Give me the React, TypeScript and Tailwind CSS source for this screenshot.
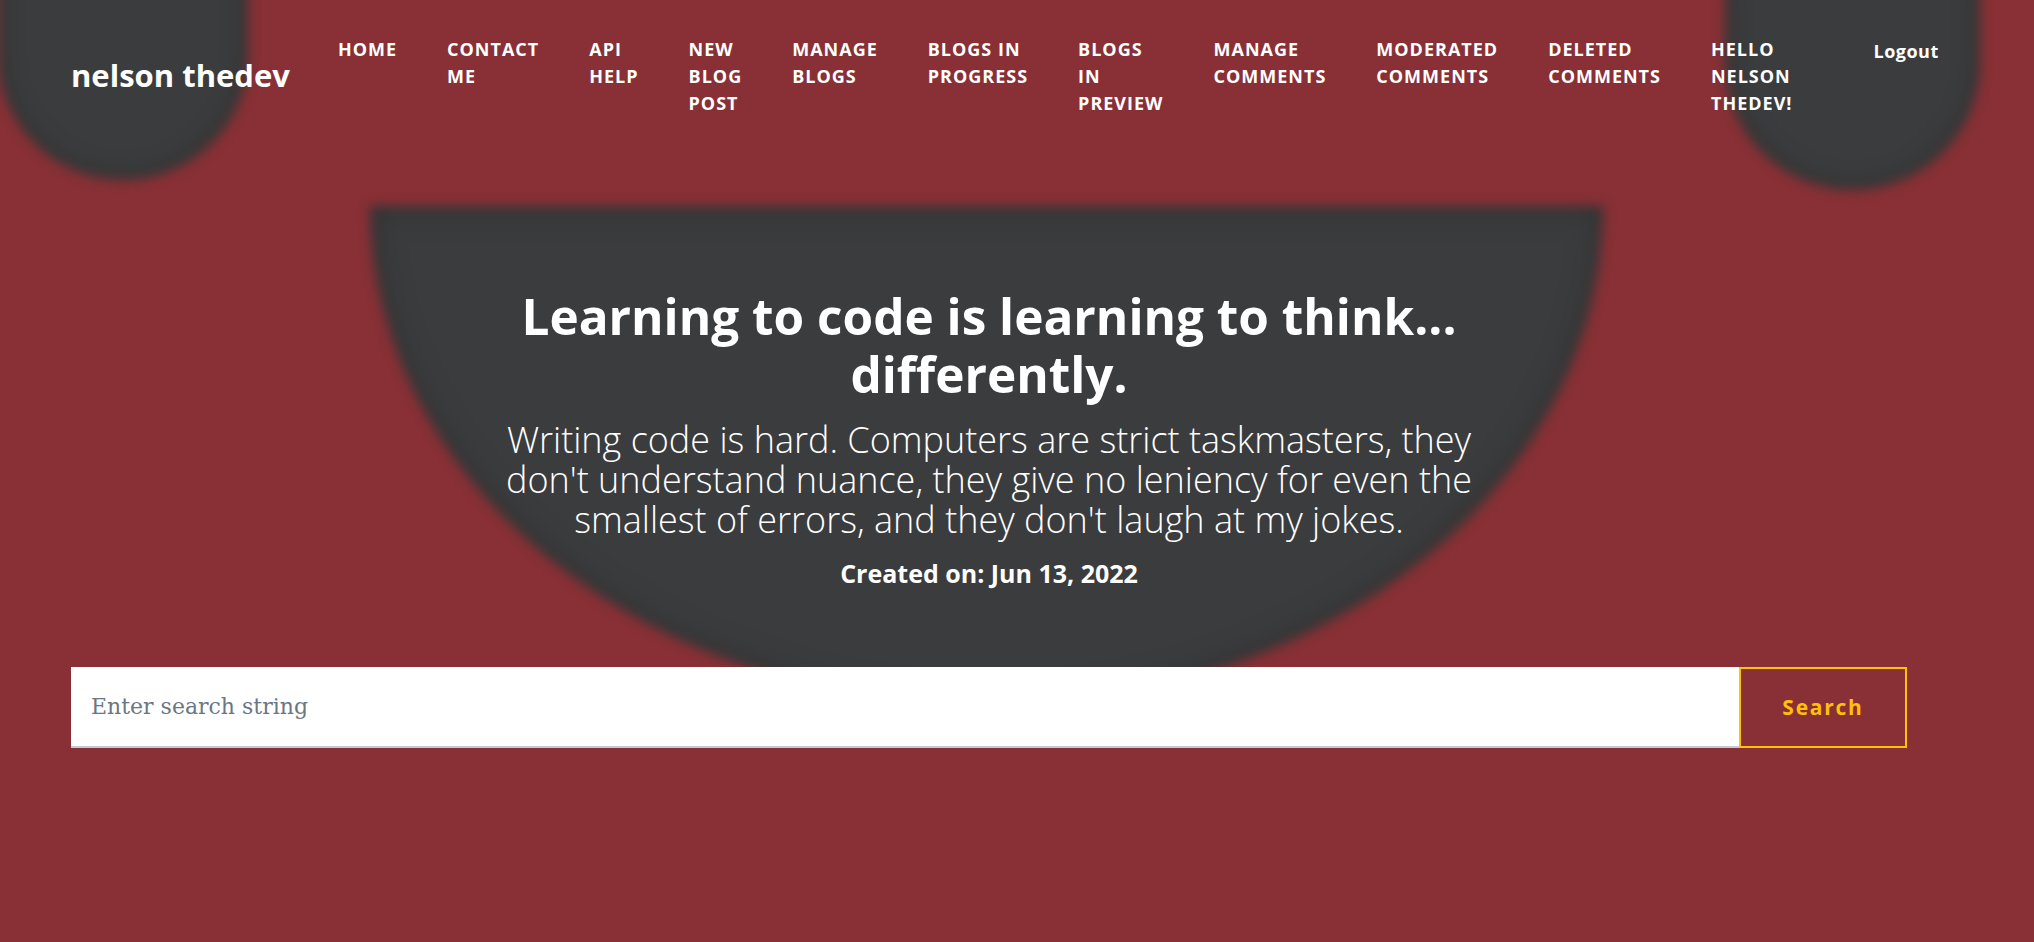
import React from "react";

const navLinks: string[][] = [
  ["HOME"],
  ["CONTACT", "ME"],
  ["API", "HELP"],
  ["NEW", "BLOG", "POST"],
  ["MANAGE", "BLOGS"],
  ["BLOGS IN", "PROGRESS"],
  ["BLOGS", "IN", "PREVIEW"],
  ["MANAGE", "COMMENTS"],
  ["MODERATED", "COMMENTS"],
  ["DELETED", "COMMENTS"],
  ["HELLO", "NELSON", "THEDEV!"],
];

const App = () => {
  return (
    <div className="relative min-h-screen h-[942px] overflow-hidden bg-[#883035] font-['Open_Sans',sans-serif] text-white">
      {/* background blobs */}
      <div className="pointer-events-none absolute left-[-2px] top-[-130px] h-[310px] w-[250px] rounded-full bg-[#3b3c3d] shadow-[inset_0_0_24px_#2c2f30] blur-[6px]" />
      <div className="pointer-events-none absolute left-[1725px] top-[-120px] h-[310px] w-[255px] rounded-full bg-[#3b3c3d] shadow-[inset_0_0_24px_#2c2f30] blur-[6px]" />
      <div className="pointer-events-none absolute left-[370px] top-[206px] h-[500px] w-[1233px] rounded-b-[50%_100%] bg-[#3b3c3d] shadow-[inset_0_0_30px_#2c2f30] blur-[6px]" />

      <div className="relative">
        {/* header */}
        <header className="flex items-start pl-[71px] pt-[36px]">
          <a className="mt-[17px] whitespace-nowrap text-[31px] font-bold leading-[45px]">
            nelson thedev
          </a>
          <ul className="ml-[48px] flex items-start gap-[50px]">
            {navLinks.map((lines, i) => (
              <li
                key={i}
                className="text-[18px] font-bold uppercase leading-[27px] tracking-[1px]"
              >
                {lines.map((l, j) => (
                  <div key={j} className="whitespace-nowrap">
                    {l}
                  </div>
                ))}
              </li>
            ))}
          </ul>
          <button className="ml-[81px] mt-[2px] text-[18px] font-bold leading-[27px] tracking-[0.5px]">
            Logout
          </button>
        </header>

        {/* hero */}
        <section className="ml-[71px] mt-[170px] flex w-[1836px] flex-col items-center text-center">
          <h1 className="w-[1000px] text-[49.5px] font-bold leading-[58px]">
            Learning to code is learning to think... differently.
          </h1>
          <p className="mt-[17px] w-[1000px] text-[36px] font-light leading-[40px]">
            Writing code is hard. Computers are strict taskmasters, they don't
            understand nuance, they give no leniency for even the smallest of
            errors, and they don't laugh at my jokes.
          </p>
          <p className="mt-[15px] text-[25px] font-bold leading-[36px]">
            Created on: Jun 13, 2022
          </p>
        </section>

        {/* search */}
        <div className="ml-[71px] mt-[76px] flex w-[1836px]">
          <input
            className="h-[81px] flex-1 border-b-2 border-[#c3cad4] bg-white px-[20px] font-['DejaVu_Serif',serif] text-[22px] text-[#333] outline-none placeholder:text-[#6b7684]"
            placeholder="Enter search string"
          />
          <button className="h-[81px] w-[168px] border-2 border-[#ffc107] text-[21px] font-bold tracking-[1.75px] text-[#ffc107]">
            Search
          </button>
        </div>
      </div>
    </div>
  );
};

export default App;
